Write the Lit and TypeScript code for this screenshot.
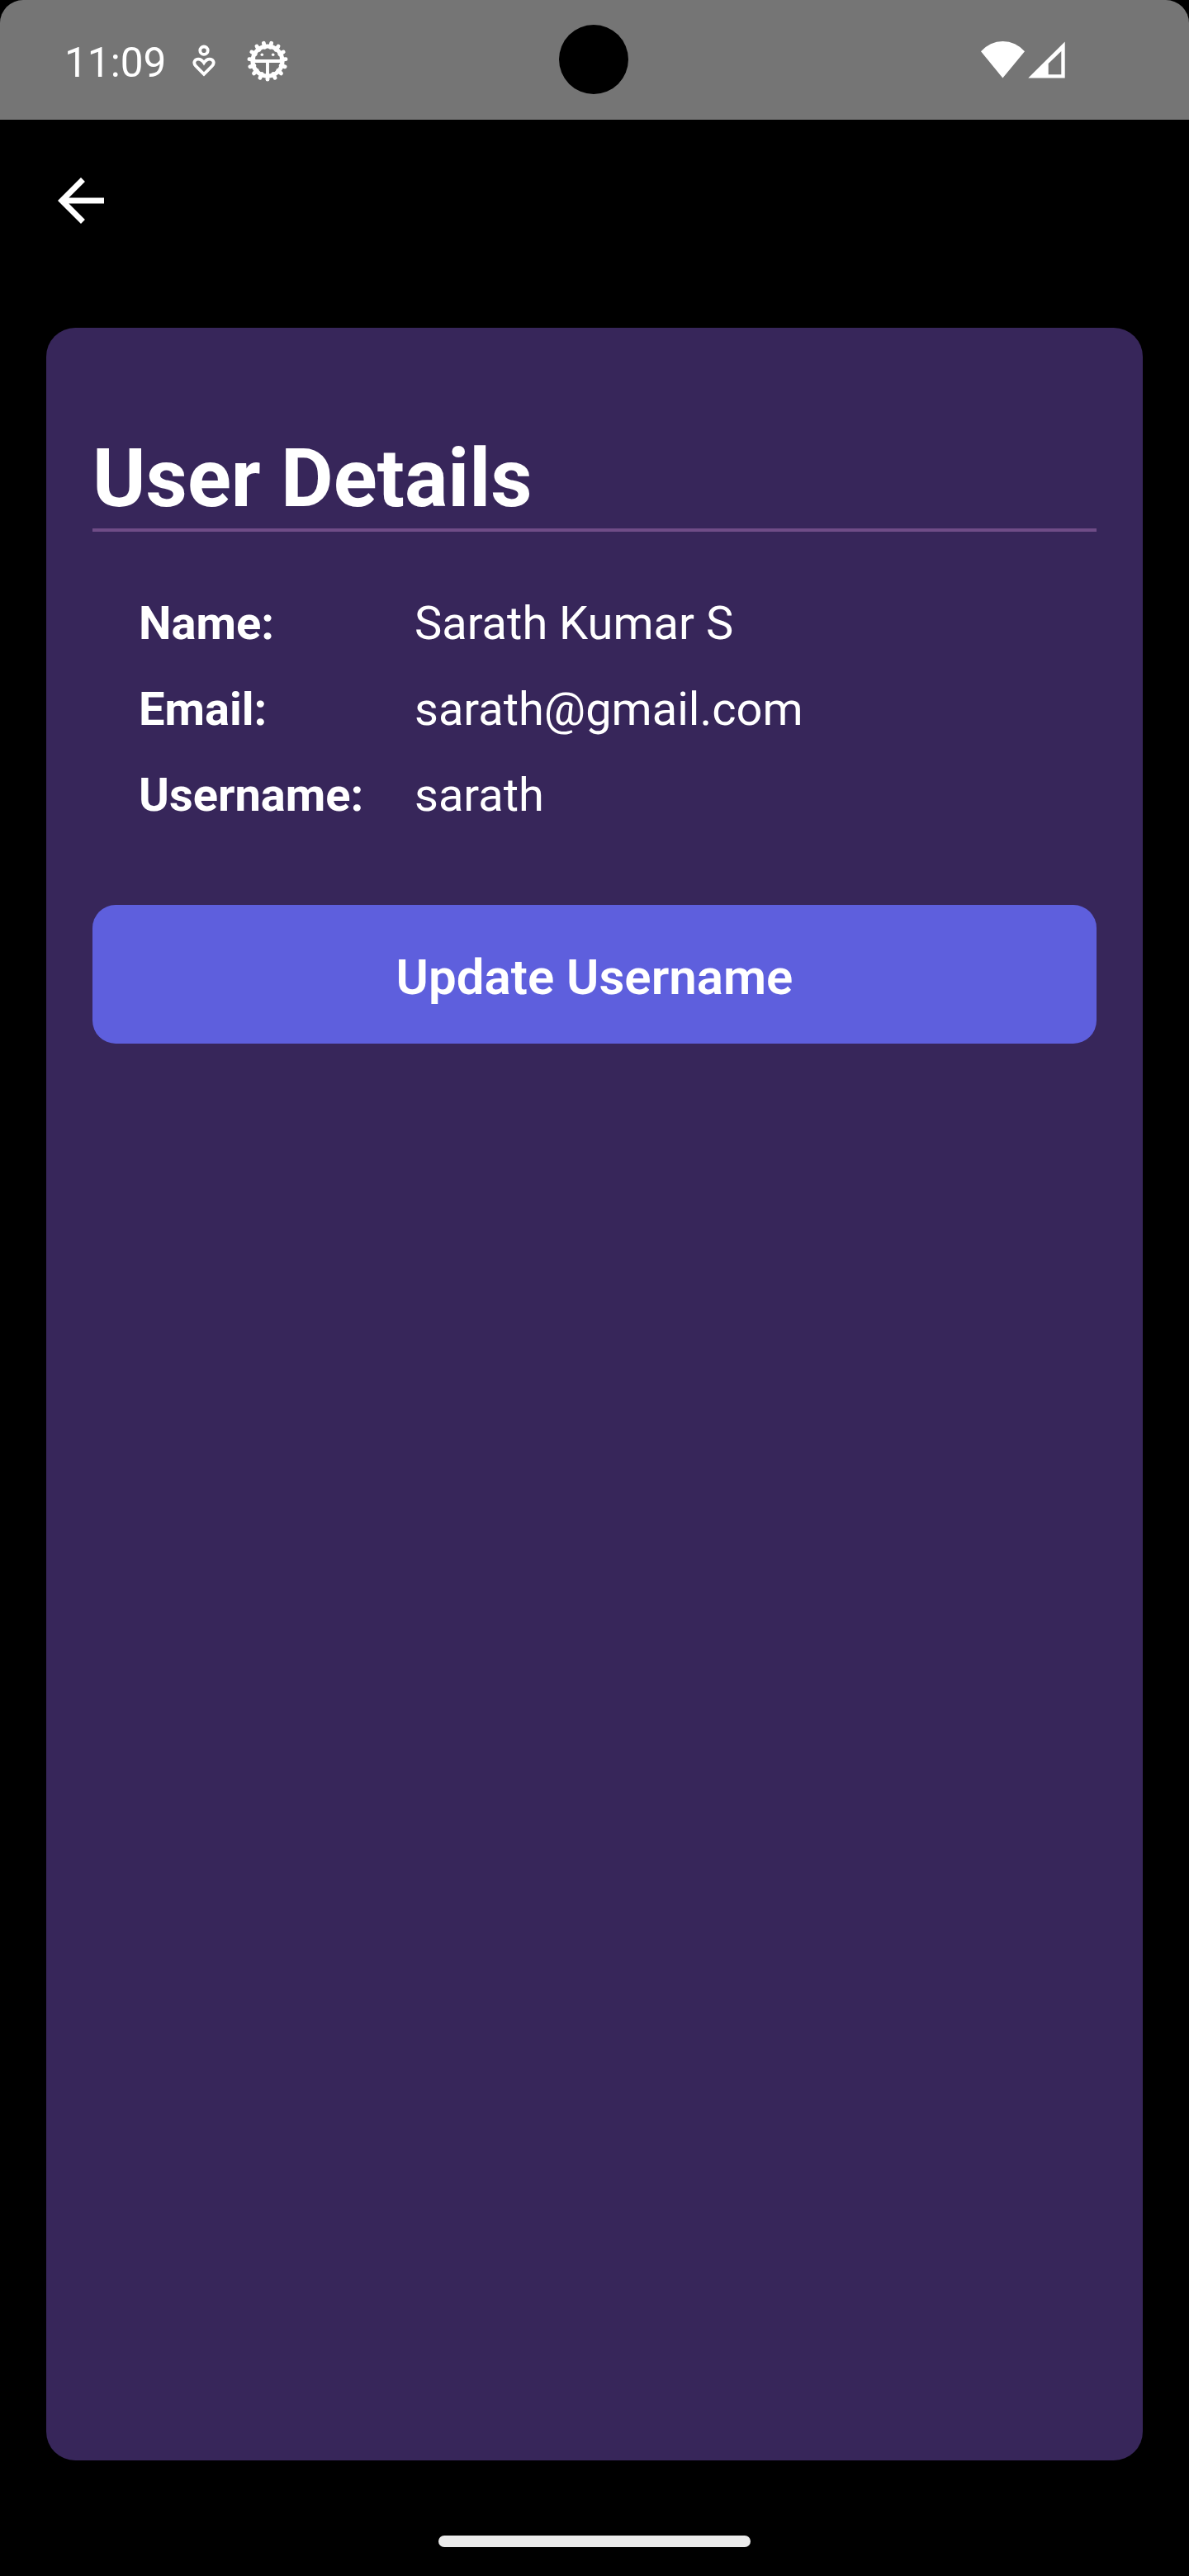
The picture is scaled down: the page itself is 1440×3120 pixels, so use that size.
import { LitElement, html, css, svg } from "lit";
import { customElement, property } from "lit/decorators.js";

interface Detail {
  label: string;
  value: string;
}

const TEETH = Array.from({ length: 15 }, (_, i) => i * 24);

@customElement("status-bar")
export class StatusBar extends LitElement {
  @property() time = "";

  static styles = css`
    :host {
      display: block;
      position: relative;
      flex: none;
      height: 145px;
      background: #757575;
      border-radius: 28px 28px 0 0;
      color: #fff;
    }
    .row {
      display: flex;
      align-items: center;
      height: 100%;
      box-sizing: border-box;
      padding: 0 150px 0 78px;
    }
    .time {
      font-size: 49.5px;
      line-height: 58px;
      padding-top: 6px;
    }
    svg {
      display: block;
      flex: none;
    }
    .heart {
      margin-left: 31px;
    }
    .bug {
      margin: 2px 0 0 36px;
    }
    .radio {
      margin-left: auto;
    }
    .camera {
      position: absolute;
      left: 677px;
      top: 30px;
      width: 84px;
      height: 84px;
      border-radius: 50%;
      background: #000;
    }
  `;

  render() {
    return html`
      <div class="row">
        <span class="time">${this.time}</span>
        <svg class="heart" width="30" height="44" viewBox="0 0 30 44" fill="none" stroke="#fff" stroke-width="3.8">
          <circle cx="15" cy="10.2" r="4.7" />
          <path d="M15 38.9 L5.2 29 C1.2 24.7 4.2 20.6 8.1 20.6 C11.6 20.6 13.4 22.6 15 25 C16.6 22.6 18.4 20.6 21.9 20.6 C25.8 20.6 28.8 24.7 24.8 29 Z" />
        </svg>
        <svg class="bug" width="52" height="52" viewBox="-26 -26 52 52">
          <g stroke="#fff" stroke-width="4.8" stroke-linecap="round">
            ${TEETH.map((a) => svg`<path d="M0 17V22.2" transform="rotate(${a})" />`)}
          </g>
          <circle r="18" fill="none" stroke="#fff" stroke-width="5.2" />
          <path d="M-17 0H17M0 0V18" fill="none" stroke="#fff" stroke-width="3.9" />
          <circle cx="-6.7" cy="-7.8" r="1.8" fill="#fff" />
          <circle cx="6.7" cy="-7.8" r="1.8" fill="#fff" />
        </svg>
        <svg class="radio" width="102" height="45" viewBox="0 0 102 45" fill="#fff">
          <path d="M0 12.3A34.7 34.7 0 0 1 53 12.3L26.4 44.5Z" />
          <path fill-rule="evenodd" d="M57.3 44.5L101.7 0.5V44.5ZM81.7 27V40.2H97.3V12Z" />
        </svg>
      </div>
      <div class="camera"></div>
    `;
  }
}

@customElement("detail-list")
export class DetailList extends LitElement {
  @property({ attribute: false }) items: Detail[] = [];

  static styles = css`
    :host {
      display: block;
    }
    .list {
      display: grid;
      grid-template-columns: 334px 1fr;
      row-gap: 38px;
      margin: 0;
      padding: 0 56px;
      font-size: 56px;
      line-height: 66px;
      white-space: nowrap;
    }
    .label {
      font-weight: 700;
    }
    .value {
      margin: 0;
    }
  `;

  render() {
    return html`
      <dl class="list">
        ${this.items.map(
          (d) => html`<dt class="label">${d.label}</dt><dd class="value">${d.value}</dd>`
        )}
      </dl>
    `;
  }
}

@customElement("app-root")
export class AppRoot extends LitElement {
  private details: Detail[] = [
    { label: "Name:", value: "Sarath Kumar S" },
    { label: "Email:", value: "sarath@gmail.com" },
    { label: "Username:", value: "sarath" },
  ];

  static styles = css`
    :host {
      display: flex;
      flex-direction: column;
      width: 1440px;
      height: 3120px;
      background: #000;
      color: #fff;
      font-family: Roboto, "Liberation Sans", sans-serif;
    }
    .header {
      display: flex;
      align-items: center;
      flex: none;
      height: 196px;
      padding: 0 56px;
    }
    .back {
      display: block;
      border: 0;
      padding: 0;
      background: none;
    }
    .back svg {
      display: block;
    }
    .card {
      flex: 1;
      margin: 56px 56px 0;
      padding: 125px 56px 0;
      border-radius: 35px;
      background: #37265a;
    }
    .title {
      margin: 0 0 78px;
      padding-bottom: 3px;
      border-bottom: 4px solid #6f4c87;
      font-size: 98px;
      line-height: 115px;
      font-weight: 700;
    }
    .update {
      display: block;
      width: 100%;
      height: 168px;
      margin: 100px 0 0;
      padding: 7px 0 0;
      border: 0;
      border-radius: 28px;
      background: #5e5fdd;
      color: #fff;
      font: 600 60px/70px Roboto, "Liberation Sans", sans-serif;
    }
    .footer {
      display: flex;
      justify-content: center;
      flex: none;
      height: 49px;
      padding-top: 91px;
    }
    .handle {
      width: 378px;
      height: 14px;
      border-radius: 7px;
      background: #ebebeb;
    }
  `;

  render() {
    return html`
      <status-bar time="11:09"></status-bar>
      <header class="header">
        <button class="back" aria-label="Back">
          <svg width="84" height="84" viewBox="0 0 24 24" fill="#fff">
            <path d="M20 11H7.83l5.59-5.59L12 4l-8 8 8 8 1.41-1.41L7.83 13H20v-2z" />
          </svg>
        </button>
      </header>
      <main class="card">
        <h1 class="title">User Details</h1>
        <detail-list .items=${this.details}></detail-list>
        <button class="update">Update Username</button>
      </main>
      <footer class="footer"><div class="handle"></div></footer>
    `;
  }
}
